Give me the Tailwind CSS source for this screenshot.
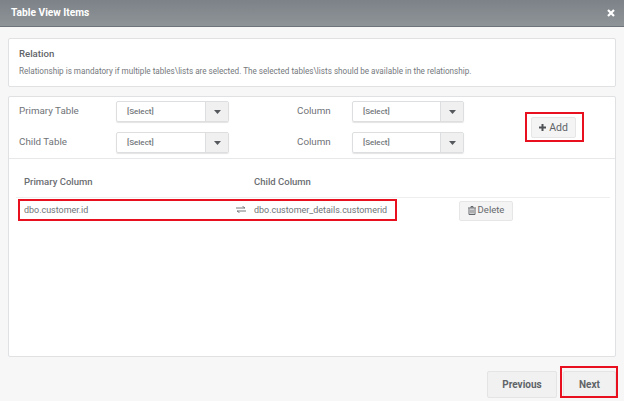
<!DOCTYPE html>
<html lang="en">
<head>
    <meta charset="UTF-8">
    <title>Table View Items</title>
    <script src="https://cdn.jsdelivr.net/npm/@tailwindcss/browser@4"></script>
</head>
<body class="relative w-[624px] h-[401px] overflow-hidden bg-[#f7f7f7] font-['Roboto',sans-serif] text-[#6f7377]">
    <!-- Header -->
    <header class="h-[27px] bg-gradient-to-b from-[#7d8288] to-[#8f9499] border-b border-[#6f747a] flex items-center justify-between pl-[11px] pr-[9px]">
        <h1 class="text-[10.2px] font-bold text-white">Table View Items</h1>
        <svg class="w-[8px] h-[8px]" viewBox="0 0 8 8"><path d="M1 1l6 6M7 1L1 7" stroke="#fff" stroke-width="2.2"/></svg>
    </header>

    <main class="px-[8px] pt-[11px]">
        <!-- Relation -->
        <section class="h-[49px] bg-white border border-[#dfe1e3] rounded-[2px] pl-[10px] pt-[8px]">
            <h2 class="text-[9.6px] leading-[13px] font-medium text-[#5f6468]">Relation</h2>
            <p class="mt-[5px] text-[8.15px] leading-[12px] text-[#74787c]">Relationship is mandatory if multiple tables\lists are selected. The selected tables\lists should be available in the relationship.</p>
        </section>

        <!-- Relationship form -->
        <section class="mt-[9px] h-[261px] bg-white border border-[#dfe1e3] rounded-[2px]">
            <div class="h-[62px] border-b border-[#e6e8ea] flex">
                <div class="grid grid-cols-[97px_113px_123px_112px] grid-rows-[21px_21px] gap-y-[10px] pl-[10px] pt-[4px] text-[9.8px] items-center">
                    <span>Primary Table</span>
                    <div class="flex h-[21px] border border-[#dcdee0] rounded-[2px] text-[8px] font-medium shadow-[0_1px_1px_#e4e4e4]">
                        <span class="flex-1 pl-[10px] leading-[19px]">[Select]</span>
                        <span class="w-[23px] bg-[#f0f0f0] border-l border-[#dcdee0] flex items-center justify-center"><svg class="w-[7px] h-[4px]" viewBox="0 0 7 4"><path d="M0 0h7L3.5 4z" fill="#55595d"/></svg></span>
                    </div>
                    <span class="pl-[68px]">Column</span>
                    <div class="flex h-[21px] border border-[#dcdee0] rounded-[2px] text-[8px] font-medium shadow-[0_1px_1px_#e4e4e4]">
                        <span class="flex-1 pl-[10px] leading-[19px]">[Select]</span>
                        <span class="w-[23px] bg-[#f0f0f0] border-l border-[#dcdee0] flex items-center justify-center"><svg class="w-[7px] h-[4px]" viewBox="0 0 7 4"><path d="M0 0h7L3.5 4z" fill="#55595d"/></svg></span>
                    </div>
                    <span>Child Table</span>
                    <div class="flex h-[21px] border border-[#dcdee0] rounded-[2px] text-[8px] font-medium shadow-[0_1px_1px_#e4e4e4]">
                        <span class="flex-1 pl-[10px] leading-[19px]">[Select]</span>
                        <span class="w-[23px] bg-[#f0f0f0] border-l border-[#dcdee0] flex items-center justify-center"><svg class="w-[7px] h-[4px]" viewBox="0 0 7 4"><path d="M0 0h7L3.5 4z" fill="#55595d"/></svg></span>
                    </div>
                    <span class="pl-[68px]">Column</span>
                    <div class="flex h-[21px] border border-[#dcdee0] rounded-[2px] text-[8px] font-medium shadow-[0_1px_1px_#e4e4e4]">
                        <span class="flex-1 pl-[10px] leading-[19px]">[Select]</span>
                        <span class="w-[23px] bg-[#f0f0f0] border-l border-[#dcdee0] flex items-center justify-center"><svg class="w-[7px] h-[4px]" viewBox="0 0 7 4"><path d="M0 0h7L3.5 4z" fill="#55595d"/></svg></span>
                    </div>
                </div>
                <button class="ml-[67px] mt-[20px] w-[45px] h-[21px] flex items-center justify-center gap-[3px] bg-[#f4f4f4] border border-[#e6e6e6] rounded-[2px] text-[10.5px] text-[#5f6468]">
                    <svg class="w-[7px] h-[7px]" viewBox="0 0 7 7"><path d="M3.5 0v7M0 3.5h7" stroke="#4f5357" stroke-width="2"/></svg>
                    Add
                </button>
            </div>

            <!-- Column table -->
            <div class="ml-[7px] mr-[5px]">
                <div class="h-[39px] pt-[9px] border-b border-[#eceeef] flex items-center text-[9.5px] font-medium text-[#6a6e72] pl-[8px]">
                    <span class="w-[230px]">Primary Column</span>
                    <span>Child Column</span>
                </div>
                <div class="h-[25px] flex items-center text-[8.95px] pl-[8px]">
                    <span class="w-[212px]">dbo.customer.id</span>
                    <svg class="w-[10px] h-[7px] mr-[8px] mb-[3px]" viewBox="0 0 10 7"><path d="M0 2h9M6.5 .3L9 2M10 5H1M3.5 6.7L1 5" fill="none" stroke="#75797d"/></svg>
                    <span class="w-[205px]">dbo.customer_details.customerid</span>
                    <button class="w-[54px] h-[20px] flex items-center justify-center gap-[2px] bg-[#f4f4f4] border border-[#e6e6e6] rounded-[2px] text-[9.5px] text-[#64686c]">
                        <svg class="w-[8px] h-[9px]" viewBox="0 0 8 9"><path d="M0 2h8M3 2V.5h2V2M1 2.5v6h6v-6M3 3.5v4M5 3.5v4" fill="none" stroke="#64686c"/></svg>
                        Delete
                    </button>
                </div>
            </div>
        </section>

        <!-- Footer buttons -->
        <div class="mt-[14px] flex justify-end gap-[6px] text-[10px] font-bold text-[#5f6468]">
            <button class="w-[70px] h-[27px] bg-[#f1f1f1] border border-[#e4e4e4] rounded-[2px]">Previous</button>
            <button class="w-[53px] h-[27px] bg-[#f1f1f1] border border-[#e4e4e4] rounded-[2px]">Next</button>
        </div>
    </main>

    <!-- Red annotation boxes -->
    <div class="absolute left-[525px] top-[112px] w-[59px] h-[30px] border-2 border-[#e8101f]"></div>
    <div class="absolute left-[18px] top-[199px] w-[379px] h-[22px] border-2 border-[#e8101f]"></div>
    <div class="absolute left-[560px] top-[366px] w-[58px] h-[32px] border-2 border-[#e8101f]"></div>
</body>
</html>
